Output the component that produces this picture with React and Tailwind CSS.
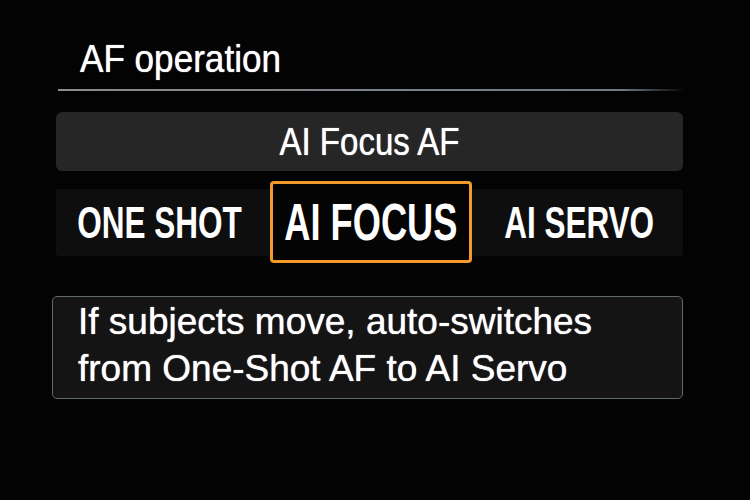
import React from 'react';

const options = [
    { label: 'ONE SHOT', selected: false },
    { label: 'AI FOCUS', selected: true },
    { label: 'AI SERVO', selected: false },
];

const AfOperationScreen = () => {
    return (
        <div className="w-[750px] h-[500px] bg-[#030303] text-white font-['Liberation_Sans',Arial,sans-serif] pl-[56px] pr-[67px] overflow-hidden">
            {/* Title */}
            <div className="pt-[39px] pl-[24px]">
                <h1 className="text-[39px] leading-none font-normal origin-left scale-x-[0.9] whitespace-nowrap [text-shadow:0_0_1px_#fff]">AF operation</h1>
            </div>
            <div className="mt-[11px] ml-[2px] -mr-[2px] h-[2px] bg-gradient-to-r from-[#8c8c8c] via-[#6f7a86] via-90% to-transparent"></div>

            {/* Current setting */}
            <div className="mt-[21px] h-[59px] rounded-[6px] bg-[#262626] flex items-center justify-center">
                <span className="text-[38px] leading-none scale-x-[0.87] whitespace-nowrap [text-shadow:0_0_1px_#fff]">AI Focus AF</span>
            </div>

            {/* Option row */}
            <div className="mt-[10px] h-[82px] flex items-center">
                <div className="w-full h-[67px] bg-[#0e0e0e] rounded-[3px] flex items-center">
                    {options.map((o, i) =>
                        o.selected ? (
                            <div key={o.label} className="w-[202px] h-[82px] shrink-0 border-[3px] border-[#f39a2b] rounded-[4px] bg-[#040404] flex items-center justify-center">
                                <span className="text-[51px] leading-none font-bold scale-x-[0.71] whitespace-nowrap">{o.label}</span>
                            </div>
                        ) : (
                            <div key={o.label} className={i === 0 ? 'flex-1 basis-0 min-w-0 pr-[6px] flex items-center justify-center' : 'flex-1 basis-0 min-w-0 pl-[4px] flex items-center justify-center'}>
                                <span className="text-[45px] leading-none font-bold scale-x-[0.7] whitespace-nowrap">{o.label}</span>
                            </div>
                        )
                    )}
                </div>
            </div>

            {/* Description */}
            <div className="mt-[33px] -ml-[4px] border-[1.5px] border-[#5f6a6a] rounded-[5px] bg-[#141414] pt-[1px] pb-[6px] pl-[25px]">
                <p className="text-[37px] leading-[47px] whitespace-nowrap [text-shadow:0_0_1px_#fff]">If subjects move, auto-switches</p>
                <p className="text-[37px] leading-[47px] whitespace-nowrap [text-shadow:0_0_1px_#fff]">from One-Shot AF to AI Servo</p>
            </div>
        </div>
    );
};

export default AfOperationScreen;
